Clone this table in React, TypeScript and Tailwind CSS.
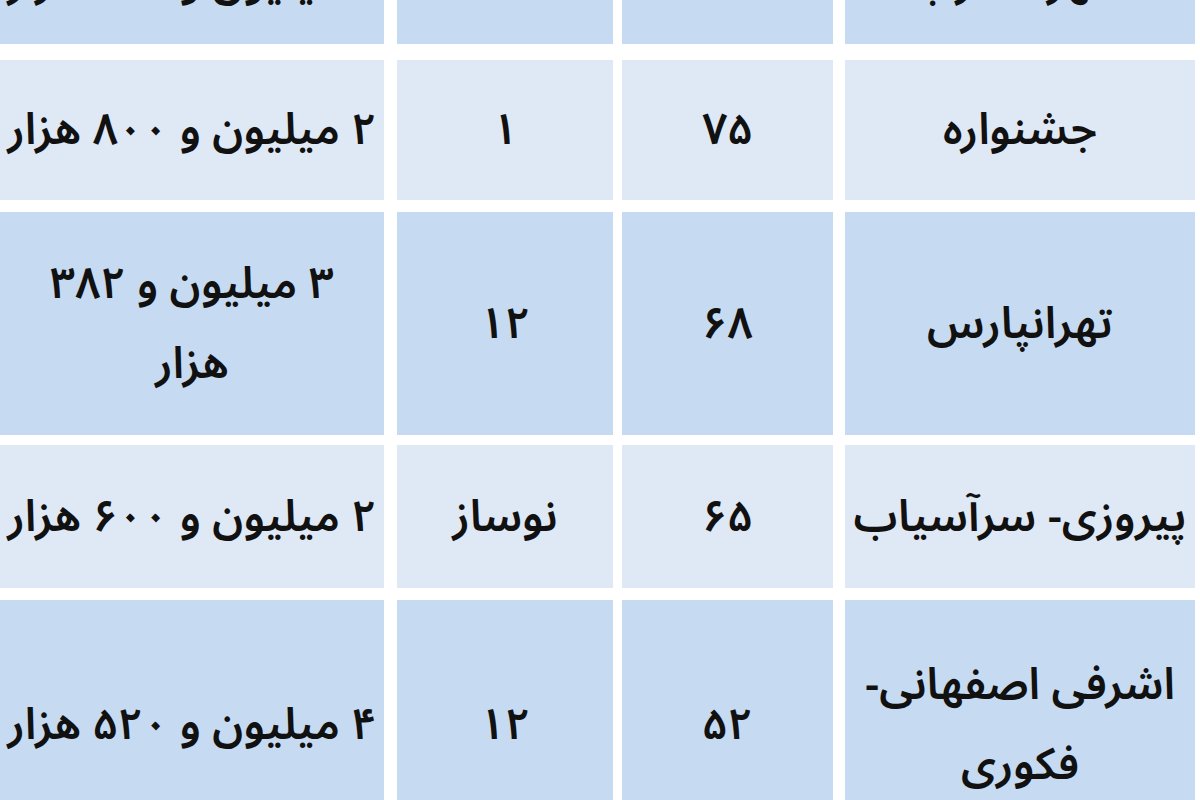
import React from 'react';

type Row = {
  name: string[];
  age: string;
  floors: string;
  price: string[];
  tone: 'dark' | 'light';
  height: string;
  gap: string;
};

const rows: Row[] = [
  { name: ['شهرک غرب'], age: '۷۰', floors: '۵', price: ['۳ میلیون و ۲۰۰ هزار'], tone: 'dark', height: 'h-[124px] -mt-[80px]', gap: '' },
  { name: ['جشنواره'], age: '۷۵', floors: '۱', price: ['۲ میلیون و ۸۰۰ هزار'], tone: 'light', height: 'h-[140px]', gap: 'mt-[16px]' },
  { name: ['تهرانپارس'], age: '۶۸', floors: '۱۲', price: ['۳ میلیون و ۳۸۲', 'هزار'], tone: 'dark', height: 'h-[223px]', gap: 'mt-[12px]' },
  { name: ['پیروزی- سرآسیاب'], age: '۶۵', floors: 'نوساز', price: ['۲ میلیون و ۶۰۰ هزار'], tone: 'light', height: 'h-[143px]', gap: 'mt-[10px]' },
  { name: ['اشرفی اصفهانی-', 'فکوری'], age: '۵۲', floors: '۱۲', price: ['۴ میلیون و ۵۲۰ هزار'], tone: 'dark', height: 'h-[250px]', gap: 'mt-[12px]' },
];

function Cell({ lines, width, bg, className = '' }: { lines: string[]; width: string; bg: string; className?: string }) {
  return (
    <div className={`${width} ${bg} ${className} flex shrink-0 flex-col items-center justify-center text-center`}>
      {lines.map((l) => (
        <span key={l} className="whitespace-nowrap leading-[80px]">
          {l}
        </span>
      ))}
    </div>
  );
}

export default function App() {
  return (
    <div
      dir="rtl"
      className="h-[800px] w-[1200px] overflow-hidden bg-white pr-[5px] text-[44px] font-semibold text-[#111111]"
      style={{ fontFamily: '"Noto Sans Arabic", "DejaVu Sans", sans-serif' }}
    >
      {rows.map((r) => {
        const bg = r.tone === 'dark' ? 'bg-[#c6dbf1]' : 'bg-[#dfe8f5]';
        return (
          <div key={r.age + r.name[0]} className={`flex ${r.height} ${r.gap}`}>
            <Cell lines={r.name} width="w-[350px]" bg={bg} />
            <Cell lines={[r.age]} width="w-[211px]" bg={bg} className="ms-[12px]" />
            <Cell lines={[r.floors]} width="w-[216px]" bg={bg} className="ms-[9px]" />
            <Cell lines={r.price} width="w-[384px]" bg={bg} className="ms-[13px]" />
          </div>
        );
      })}
    </div>
  );
}
